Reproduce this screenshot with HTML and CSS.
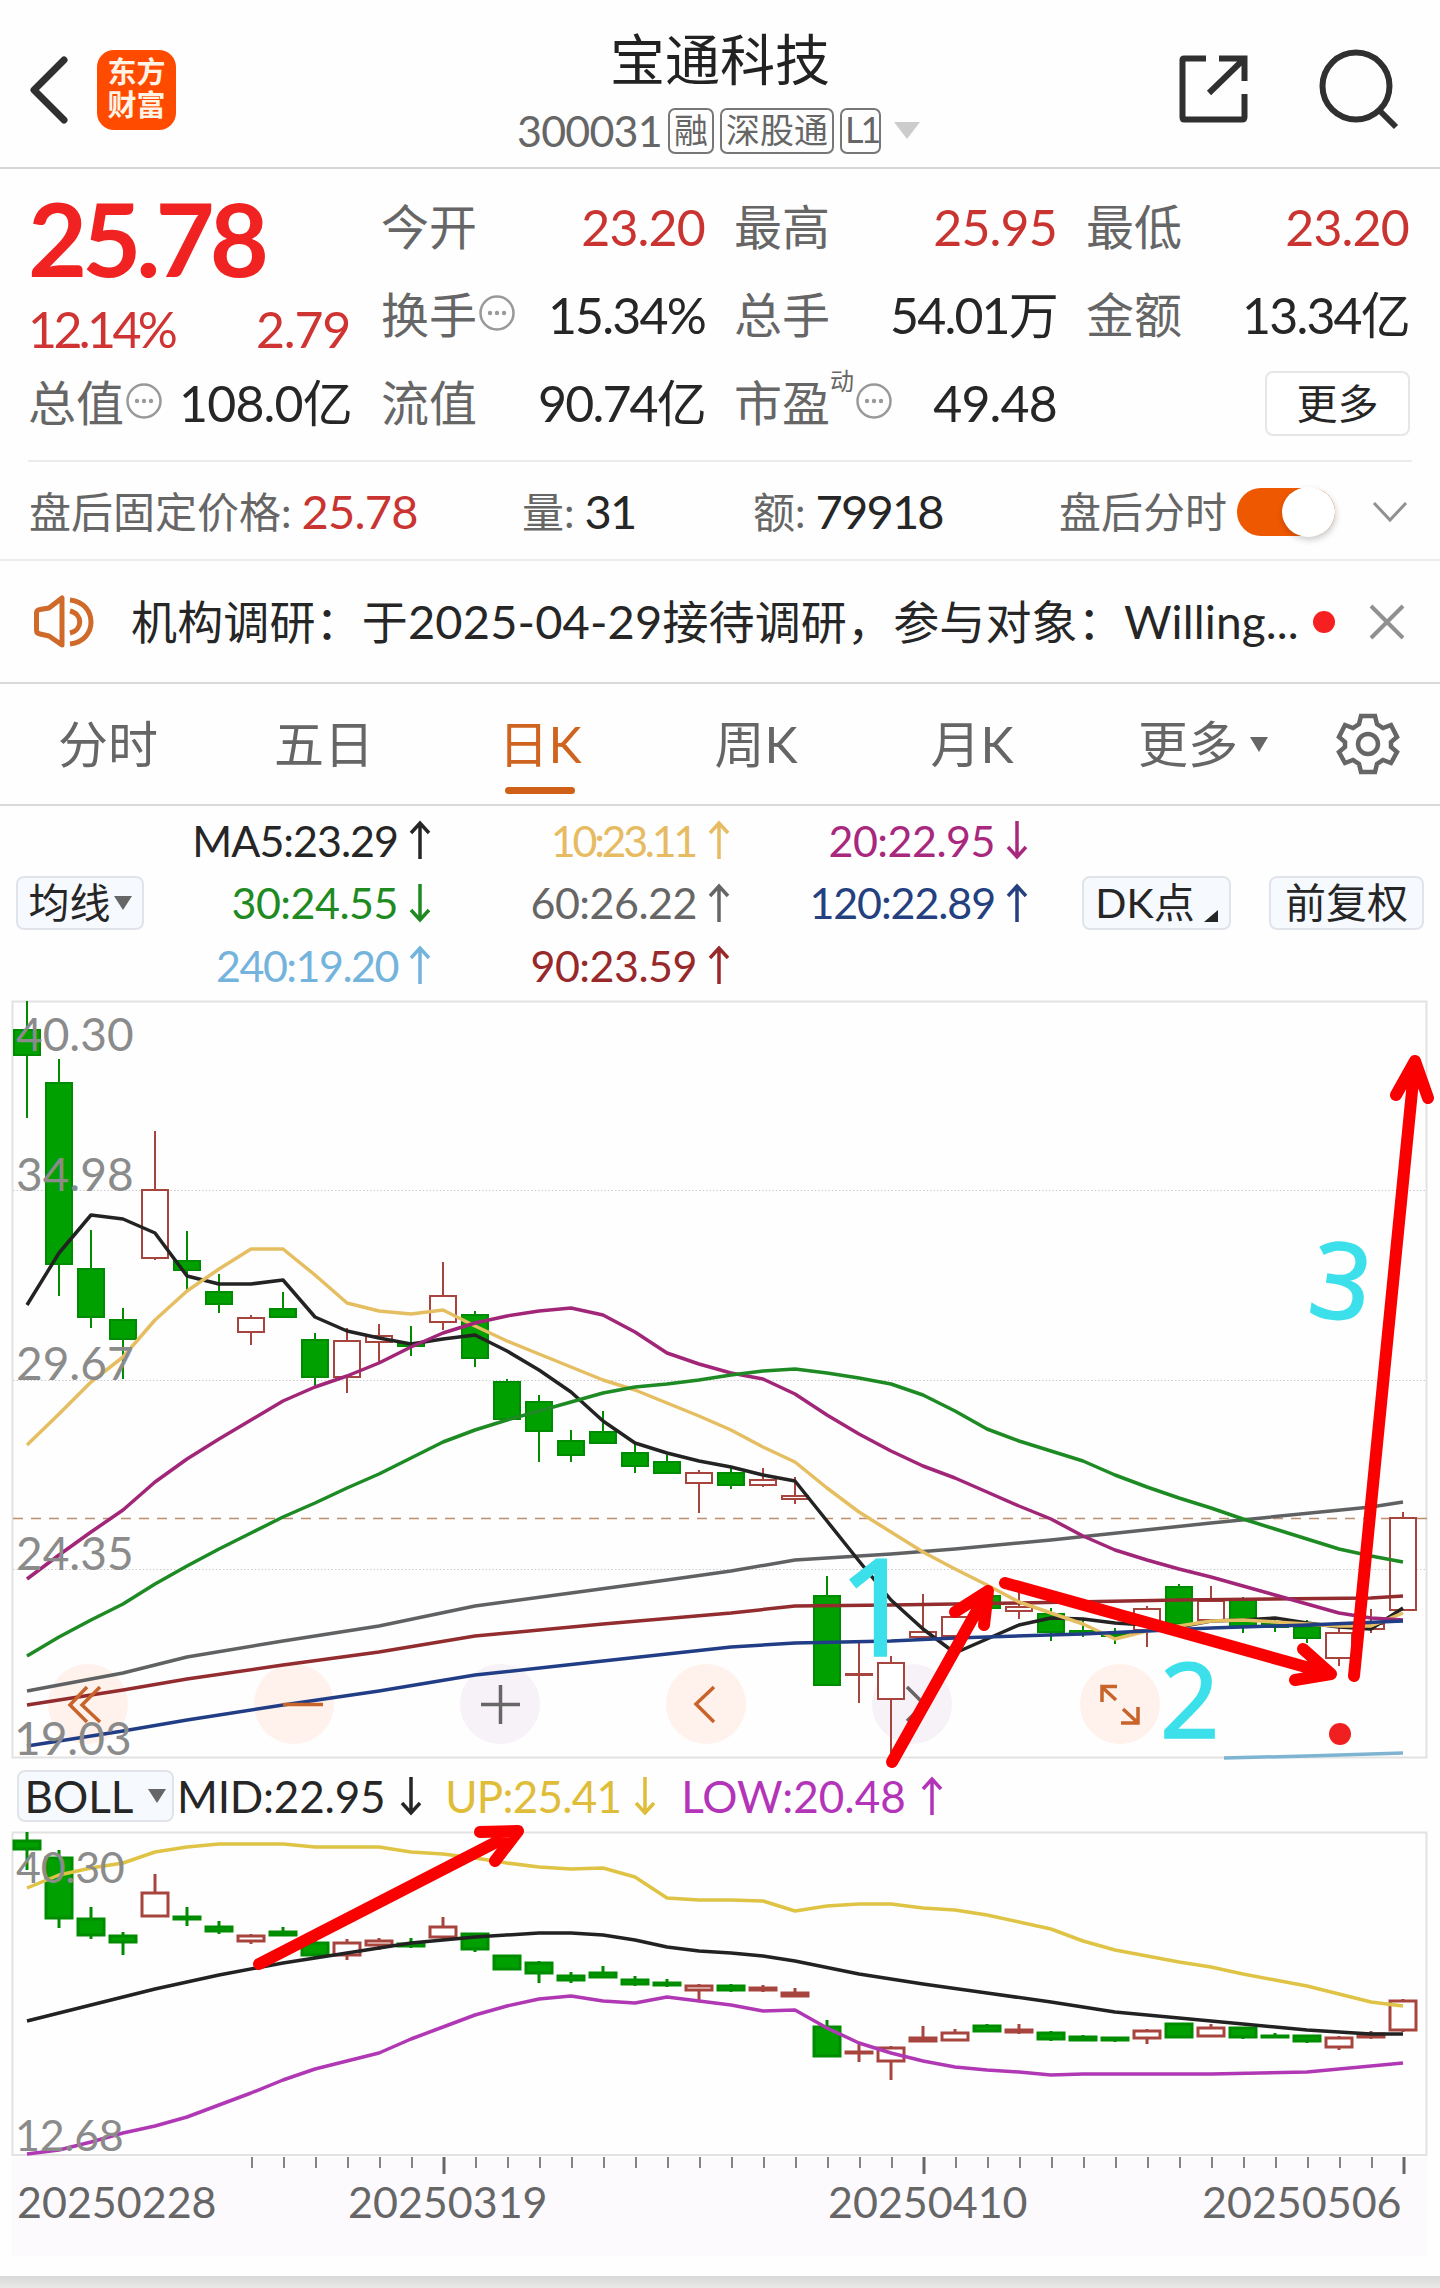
FILE: index.html
```html
<!DOCTYPE html>
<html lang="zh-CN">
<head>
    <meta charset="UTF-8">
    <meta name="viewport" content="width=device-width, initial-scale=1.0">
    <title>宝通科技 300031</title>
    <link rel="stylesheet" href="styles.css">
</head>
<body>
    <svg class="defs" width="0" height="0">
        <symbol id="up" viewBox="0 0 22 40"><path d="M11 39V3M2 13L11 3L20 13"/></symbol>
        <symbol id="down" viewBox="0 0 22 40"><path d="M11 1V37M2 27L11 37L20 27"/></symbol>
        <symbol id="more" viewBox="0 0 36 36">
            <circle cx="18" cy="18" r="16.5" fill="none" stroke="#999" stroke-width="2.5"/>
            <circle cx="11" cy="18" r="2.2" fill="#999"/><circle cx="18" cy="18" r="2.2" fill="#999"/><circle cx="25" cy="18" r="2.2" fill="#999"/>
        </symbol>
    </svg>

    <header class="header">
        <svg class="back" width="44" height="70" viewBox="0 0 44 70"><path d="M37 6L7 36L37 66"/></svg>
        <div class="logo"><span>东方</span><span>财富</span></div>
        <div class="title">
            <h1>宝通科技</h1>
            <div class="code">
                <span class="num">300031</span>
                <span class="tag">融</span>
                <span class="tag">深股通</span>
                <span class="tag tag-l1">L1</span>
                <i class="tri tri-light"></i>
            </div>
        </div>
        <svg class="share" width="70" height="70" viewBox="0 0 70 70"><path d="M28 4.500H6Q4.500 4.500 4.500 6V63Q4.500 65.500 6 65.500H64Q66.500 65.500 66.500 63V40M41 4.500H66.500V27M66 5L31 39"/></svg>
        <svg class="search" width="84" height="84" viewBox="0 0 84 84"><circle cx="39" cy="39" r="33.500"/><path d="M62 63L79 80"/></svg>
    </header>

    <section class="stats">
        <div class="price">
            <div class="last">25.78</div>
            <div class="change"><span class="pct">12.14%</span><span>2.79</span></div>
        </div>
        <div class="cell"><label>今开</label><b class="red">23.20</b></div>
        <div class="cell"><label>最高</label><b class="red">25.95</b></div>
        <div class="cell"><label>最低</label><b class="red">23.20</b></div>
        <div class="cell"><label>换手</label><svg class="info"><use href="#more"/></svg><b class="tight">15.34%</b></div>
        <div class="cell"><label>总手</label><b class="tight">54.01万</b></div>
        <div class="cell"><label>金额</label><b class="tight">13.34亿</b></div>
        <div class="cell"><label>总值</label><svg class="info"><use href="#more"/></svg><b>108.0亿</b></div>
        <div class="cell"><label>流值</label><b class="tight">90.74亿</b></div>
        <div class="cell"><label>市盈<sup>动</sup></label><svg class="info"><use href="#more"/></svg><b>49.48</b></div>
        <div class="cell last-cell"><button class="more-btn">更多</button></div>
    </section>

    <section class="after">
        <div class="after-item after-price"><label>盘后固定价格:</label><b class="red">25.78</b></div>
        <div class="after-item after-vol"><label>量:</label><b class="tight">31</b></div>
        <div class="after-item after-amt"><label>额:</label><b class="tight">79918</b></div>
        <div class="after-item after-time"><label>盘后分时</label></div>
        <div class="toggle"><i></i></div>
        <svg class="fold" width="36" height="22" viewBox="0 0 36 22"><path d="M2 2L18 19L34 2"/></svg>
    </section>

    <section class="notice">
        <svg class="speaker" width="64" height="56" viewBox="0 0 64 56">
            <path d="M3.500 19Q3.500 16 7 15.500L16 14L29 4V51L16 42L7 40Q3.500 39.500 3.500 36Z"/>
            <path d="M37 17C50 20 50 36 37 39M37 6C65 9 65 47 37 50"/>
        </svg>
        <p>机构调研：于<span class="date">2025-04-29</span>接待调研，参与对象：<span class="en">Willing...</span></p>
        <i class="dot"></i>
        <svg class="close" width="36" height="36" viewBox="0 0 36 36"><path d="M2 2L34 34M34 2L2 34"/></svg>
    </section>

    <nav class="tabs">
        <a>分时</a>
        <a>五日</a>
        <a class="active">日K</a>
        <a>周K</a>
        <a>月K</a>
        <a class="tab-more">更多<i class="tri tri-tab"></i></a>
        <svg class="gear" width="64" height="64" viewBox="0 0 64 64">
            <path d="M25 4H39L41 12L47 16L55 13L61 25L55 30V35L61 40L55 51L47 48L41 52L39 60H25L23 52L17 48L9 51L3 40L9 35V30L3 25L9 13L17 16L23 12Z"/>
            <circle cx="32" cy="32" r="10"/>
        </svg>
    </nav>

    <section class="legend">
        <button class="chip chip-ma">均线<i class="tri tri-chip"></i></button>
        <div class="ma">
            <span class="c5">MA5:23.29<svg><use href="#up"/></svg></span>
            <span class="c10">10:23.11<svg><use href="#up"/></svg></span>
            <span class="c20">20:22.95<svg><use href="#down"/></svg></span>
            <span class="c30">30:24.55<svg><use href="#down"/></svg></span>
            <span class="c60">60:26.22<svg><use href="#up"/></svg></span>
            <span class="c120">120:22.89<svg><use href="#up"/></svg></span>
            <span class="c240">240:19.20<svg><use href="#up"/></svg></span>
            <span class="c90">90:23.59<svg><use href="#up"/></svg></span>
        </div>
        <button class="chip chip-dk">DK点<i class="corner"></i></button>
        <button class="chip chip-fq">前复权</button>
    </section>

    <section class="charts">
        <svg class="chart" id="kline" width="1440" height="770" viewBox="0 996 1440 770">
            <rect class="frame" x="12.500" y="1001.500" width="1414" height="756"/>
            <path class="grid" d="M13 1190.500H1427M13 1380.500H1427M13 1569.500H1427"/>
            <path class="now" d="M13 1518.500H1427"/>
            <g class="tools">
                <circle class="warm" cx="88" cy="1704" r="40"/>
                <circle class="warm" cx="294" cy="1704" r="40"/>
                <circle class="cool" cx="500" cy="1704" r="40"/>
                <circle class="warm" cx="706" cy="1704" r="40"/>
                <circle class="cool" cx="912" cy="1704" r="40"/>
                <circle class="warm" cx="1120" cy="1704" r="40"/>
                <path class="gray" d="M907 1687L924 1704L907 1721"/>
            </g>
            <g id="kline-data"></g>
            <g class="tools">
                <path d="M87 1687L70 1705L87 1722M100 1687L82 1705L100 1722M283 1704.500H323"/>
                <path class="gray" d="M481 1704.500H520M500.500 1685V1724"/>
                <path d="M714 1687L696 1704L714 1722M1116 1700L1102 1687M1117 1686.500H1102V1702M1123 1709L1138 1723M1121 1723H1138V1707"/>
            </g>
            <circle class="mark" cx="1340" cy="1734" r="11"/>
            <g class="scale">
                <text x="16" y="1051">40.30</text>
                <text x="16" y="1191">34.98</text>
                <text x="16" y="1380">29.67</text>
                <text x="16" y="1570">24.35</text>
                <text x="14" y="1755">19.03</text>
            </g>
        </svg>

        <div class="boll">
            <button class="chip chip-boll">BOLL<i class="tri tri-chip"></i></button>
            <span class="mid">MID:22.95<svg><use href="#down"/></svg></span>
            <span class="upper">UP:25.41<svg><use href="#down"/></svg></span>
            <span class="low">LOW:20.48<svg><use href="#up"/></svg></span>
        </div>

        <svg class="chart" id="boll" width="1440" height="448" viewBox="0 1828 1440 448">
            <rect class="axis-bg" x="12" y="2157" width="1415" height="99"/>
            <rect class="frame" x="12.500" y="1832.500" width="1414" height="322.500"/>
            <g id="boll-data"></g>
            <g id="ticks"></g>
            <g class="scale scale-small">
                <text x="16" y="1883">40.30</text>
                <text x="15" y="2151">12.68</text>
            </g>
            <g class="dates">
                <text x="17" y="2218">20250228</text>
                <text x="348" y="2218">20250319</text>
                <text x="828" y="2218">20250410</text>
                <text x="1202" y="2218">20250506</text>
            </g>
        </svg>

        <!-- hand-drawn wave marks over both charts -->
        <svg class="notes" width="1440" height="1280" viewBox="0 996 1440 1280">
            <text x="838" y="1656" font-size="136">1</text>
            <text x="1160" y="1738" font-size="104">2</text>
            <text x="1311" y="1319" font-size="106" transform="rotate(8 1340 1280)">3</text>
            <path d="M892 1762L988 1591M955 1612L988 1591L984 1625"/>
            <path d="M1005 1583L1331 1674M1303 1649L1331 1674L1295 1680"/>
            <path d="M1354 1676L1415 1061M1396 1095L1415 1061L1428 1098"/>
            <path d="M259 1964L518 1831M480 1832L518 1831L495 1861"/>
        </svg>
    </section>

    <footer class="bottom"></footer>

    <script src="script.js"></script>
</body>
</html>
```
FILE: styles.css
```css
* {
    box-sizing: border-box;
}
body {
    margin: 0;
    width: 1440px;
    height: 2288px;
    overflow: hidden;
    background: #fefefe;
    color: #262626;
    font-family: Lato, "Noto Sans CJK SC", sans-serif;
    line-height: 1;
}
button {
    font-family: inherit;
    color: inherit;
    line-height: 1;
    padding: 0;
}
b, h1 {
    font-weight: 400;
}
svg {
    display: block;
    flex: none;
}
.defs {
    position: absolute;
}
.defs path {
    fill: none;
    stroke: currentColor;
    stroke-width: 3.5;
}
.red {
    color: #c93431;
}
.tri {
    display: inline-block;
    border-left: 9px solid transparent;
    border-right: 9px solid transparent;
    border-top: 15px solid #666;
}

/* header */
.header {
    display: flex;
    height: 169px;
    border-bottom: 2px solid #d6d6d6;
    padding-left: 27px;
}
.header path, .header circle {
    fill: none;
    stroke: #303030;
    stroke-width: 6;
}
.back {
    margin-top: 54px;
}
.header .back path {
    stroke-width: 7;
    stroke-linecap: round;
    stroke-linejoin: round;
}
.logo {
    display: flex;
    flex-direction: column;
    align-items: center;
    justify-content: center;
    gap: 4px;
    width: 79px;
    height: 80px;
    margin: 50px 0 0 26px;
    padding-bottom: 4px;
    border-radius: 17px;
    background: #ff4b00;
    color: #fff3e6;
    font-size: 29px;
    font-weight: 700;
}
.title {
    width: 410px;
    margin-left: 341px;
}
.title h1 {
    margin: 32px 0 0 93px;
    font-size: 55px;
    font-weight: 400;
    color: #222;
}
.code {
    display: flex;
    align-items: center;
    gap: 6px;
    height: 47px;
    margin-top: 20px;
    color: #666;
}
.num {
    width: 145px;
    font-size: 43px;
    letter-spacing: -0.8px;
}
.tag {
    height: 46px;
    padding: 0 4px;
    border: 2px solid #777;
    border-radius: 7px;
    font-size: 34px;
    line-height: 39px;
    white-space: nowrap;
}
.tag-l1 {
    width: 41px;
    padding: 0 3px;
    font-size: 36px;
    letter-spacing: -3px;
}
.tri-light {
    margin-left: 7px;
    border-width: 17px 13px 0;
    border-color: #ccc transparent;
}
.share {
    margin: 54px 0 0 251px;
}
.search {
    margin: 47px 0 0 69px;
}

/* quote numbers */
.stats {
    display: grid;
    grid-template-columns: 322px 322px 321px 321px;
    grid-template-rows: repeat(3, 88px);
    column-gap: 31px;
    height: 293px;
    margin: 0 28px;
    padding: 14px 0 0;
    border-bottom: 2px solid #ececec;
}
.price {
    grid-row: span 2;
    color: #f02222;
}
.last {
    margin-top: 4px;
    height: 102px;
    font-size: 102px;
    font-weight: 700;
    letter-spacing: -5px;
}
.change {
    display: flex;
    justify-content: space-between;
    margin-top: 15px;
    font-size: 50px;
    letter-spacing: -1.2px;
    color: #cf3432;
}
.pct {
    letter-spacing: -3.6px;
}
.cell {
    display: flex;
    align-items: center;
}
.cell label {
    position: relative;
    font-size: 48px;
    color: #666;
}
.cell sup {
    display: inline-block;
    width: 24px;
    height: 24px;
    margin-top: -12px;
    font-size: 24px;
    line-height: 1;
    vertical-align: 31px;
}
.cell b {
    margin-left: auto;
    margin-right: -2px;
    font-size: 50px;
    letter-spacing: -0.8px;
    white-space: nowrap;
}
.cell .tight, .after .tight {
    letter-spacing: -1.8px;
}
.info {
    width: 36px;
    height: 36px;
    margin-left: 2px;
    margin-top: -4px;
}
.more-btn {
    width: 145px;
    height: 65px;
    margin: 0 -3px 0 auto;
    border: 2px solid #e6e6e6;
    border-radius: 8px;
    background: #fff;
    font-size: 41px;
}

/* after-hours row */
.after {
    display: flex;
    align-items: center;
    height: 99px;
    padding-left: 29px;
    padding-top: 2px;
    border-bottom: 2px solid #ececec;
}
.after-item {
    display: flex;
    align-items: center;
    gap: 10px;
    font-size: 42px;
}
.after label {
    color: #666;
    white-space: nowrap;
}
.after b {
    font-size: 47px;
    letter-spacing: -0.8px;
}
.after-price {
    width: 493px;
}
.after-vol {
    width: 231px;
}
.after-amt {
    width: 306px;
}
.after-time {
    width: 178px;
}
.toggle {
    display: flex;
    justify-content: flex-end;
    width: 98px;
    height: 48px;
    border-radius: 24px;
    background: #ee5800;
}
.toggle i {
    width: 53px;
    height: 50px;
    margin-top: -1px;
    border-radius: 50%;
    background: #fff;
    box-shadow: 1px 3px 6px rgba(0, 0, 0, 0.2);
}
.fold {
    margin-left: 37px;
}
.fold path, .close path {
    fill: none;
    stroke: #909090;
    stroke-width: 3;
}

/* notice */
.notice {
    display: flex;
    align-items: center;
    height: 123px;
    padding-left: 33px;
    border-bottom: 2px solid #d9d9d9;
}
.speaker path {
    fill: none;
    stroke: #cf6a2a;
    stroke-width: 5;
    stroke-linejoin: round;
}
.notice p {
    width: 1167px;
    margin: 0 0 0 34px;
    font-size: 46px;
    letter-spacing: 0.15px;
    white-space: nowrap;
}
.date {
    font-size: 47px;
}
.en {
    font-size: 46px;
}
.dot {
    width: 22px;
    height: 22px;
    margin-left: 15px;
    border-radius: 50%;
    background: #f5201f;
}
.close {
    margin-left: 34px;
}
.close path {
    stroke-width: 4;
}

/* period tabs */
.tabs {
    display: grid;
    grid-template-columns: 216px 216px 216px 216px 216px 246px 1fr;
    align-items: center;
    height: 122px;
    border-bottom: 2px solid #d9d9d9;
}
.tabs a {
    display: flex;
    align-items: center;
    justify-content: center;
    height: 100%;
    font-size: 50px;
    color: #666;
    white-space: nowrap;
}
.tabs .active {
    position: relative;
    color: #cf6420;
}
.tabs .active::after {
    content: "";
    position: absolute;
    left: 73px;
    bottom: 10px;
    width: 70px;
    height: 7px;
    border-radius: 4px;
    background: #d06018;
}
.tri-tab {
    margin-left: 12px;
}
.gear {
    margin-left: 10px;
}
.gear path, .gear circle {
    fill: none;
    stroke: #666;
    stroke-width: 4.5;
}

/* moving average legend */
.legend {
    display: flex;
    align-items: center;
    height: 190px;
    padding: 3px 0 0 16px;
}
.chip {
    display: flex;
    align-items: center;
    justify-content: center;
    height: 54px;
    border: 2px solid #e0e4ea;
    border-radius: 8px;
    background: #f6f9fe;
    font-size: 41px;
    white-space: nowrap;
}
.chip-ma {
    width: 128px;
}
.tri-chip {
    margin-left: 3px;
    border-width: 14px 9px 0;
}
.ma {
    display: grid;
    grid-template-columns: 287px 299px 298px;
    grid-auto-rows: 62.5px;
    width: 938px;
}
.ma span, .boll span {
    display: flex;
    align-items: center;
    justify-content: flex-end;
    gap: 11px;
    font-size: 43px;
    letter-spacing: -0.5px;
}
.ma svg, .boll svg {
    width: 22px;
    height: 40px;
}
.ma .c5 { color: #262626; letter-spacing: -1px; }
.ma .c10 { color: #e6bb62; letter-spacing: -3.3px; gap: 13px; }
.c20 { color: #a8287e; }
.c30 { color: #1f8a22; }
.c60 { color: #666; }
.ma .c120 { color: #24407e; letter-spacing: -1.1px; }
.ma .c240 { color: #74b4dc; letter-spacing: -1.5px; }
.c90 { color: #98292b; }
.chip-dk {
    width: 149px;
}
.corner {
    align-self: flex-end;
    margin: 0 0 6px 9px;
    border-left: 14px solid transparent;
    border-bottom: 12px solid #262626;
}
.chip-fq {
    width: 155px;
    margin-left: 38px;
}

/* charts */
.charts {
    position: relative;
    height: 1280px;
}
.frame {
    fill: none;
    stroke: #e2e2e2;
    stroke-width: 2;
}
.grid {
    stroke: #ccc;
    stroke-dasharray: 1.5 2;
}
.now {
    stroke: #bd8e6d;
    stroke-width: 1.3;
    stroke-dasharray: 10 8;
}
.line {
    fill: none;
    stroke-width: 3.5;
    stroke-linejoin: round;
}
.green {
    fill: #00a000;
    stroke: #008c00;
}
.hollow {
    fill: #fff;
    stroke: #a7443e;
}
.warm {
    fill: #fff1ec;
}
.cool {
    fill: #f7f2f8;
}
.tools path {
    fill: none;
    stroke: #c8642a;
    stroke-width: 3.5;
}
.tools .gray {
    stroke: #666;
}
.mark {
    fill: #f02020;
}
.scale {
    font-size: 46px;
    fill: #8b8b8b;
}
.scale-small {
    font-size: 43px;
    letter-spacing: -0.3px;
}
.dates {
    font-size: 43px;
    fill: #666;
}
.axis-bg {
    fill: #fdfafe;
}
.boll {
    display: flex;
    align-items: center;
    height: 62px;
    padding-left: 17px;
    padding-bottom: 3px;
}
.boll span {
    gap: 15px;
    font-size: 44px;
}
.chip-boll {
    width: 157px;
    height: 52px;
    font-size: 44px;
}
.chip-boll .tri-chip {
    margin-left: 15px;
}
.boll .mid {
    margin-left: 3px;
    letter-spacing: -0.2px;
}
.boll .upper {
    margin-left: 23px;
    gap: 13px;
    color: #dfbd38;
    letter-spacing: -0.8px;
}
.boll .low {
    margin-left: 25px;
    color: #b334b8;
    letter-spacing: 0;
}
.notes {
    position: absolute;
    left: 0;
    top: 0;
}
.notes path {
    fill: none;
    stroke: #fb0000;
    stroke-width: 12;
    stroke-linecap: round;
    stroke-linejoin: round;
}
.notes text {
    font-family: "Noto Sans", sans-serif;
    fill: #3ce0ea;
    stroke: #3ce0ea;
    stroke-width: 1.5;
}
.bottom {
    height: 12px;
    background: linear-gradient(#d8d8d8, #eaeae8);
}
```
FILE: script.js
```javascript
const NS = 'http://www.w3.org/2000/svg';
const X0 = 27;
const STEP = 32;

// [rising, high, body top, body bottom, low]
const kline = [
    [0,1001,1030,1055,1118],[0,1059,1083,1264,1296],[0,1230,1269,1317,1328],[0,1308,1320,1339,1379],
    [1,1131,1190,1258,1260],[0,1231,1261,1270,1290],[0,1274,1292,1304,1313],[1,1315,1318,1332,1345],
    [0,1292,1309,1317,1318],[0,1333,1340,1377,1388],[1,1328,1341,1377,1393],[1,1324,1336,1342,1363],
    [0,1326,1343,1346,1356],[1,1262,1296,1322,1330],[0,1311,1315,1358,1367],[0,1379,1382,1419,1419],
    [0,1395,1402,1431,1462],[0,1430,1441,1455,1462],[0,1411,1432,1443,1444],[0,1442,1453,1466,1473],
    [0,1455,1462,1473,1474],[1,1470,1473,1483,1513],[0,1467,1473,1485,1489],[1,1468,1480,1485,1487],
    [1,1477,1496,1499,1504],[0,1576,1596,1685,1686],[1,1643,1674,1675,1703],[1,1656,1663,1699,1756],
    [1,1594,1632,1637,1638],[1,1614,1617,1636,1637],[0,1590,1596,1608,1610],[1,1592,1607,1611,1619],
    [0,1608,1614,1632,1641],[0,1620,1631,1634,1637],[0,1628,1634,1636,1644],[1,1606,1609,1630,1647],
    [0,1584,1587,1624,1626],[1,1586,1601,1620,1622],[0,1597,1600,1626,1633],[0,1618,1623,1627,1632],
    [0,1620,1627,1638,1643],[1,1628,1633,1658,1666],[1,1609,1624,1629,1633],[1,1512,1518,1610,1611]
];

const boll = [
    [0,1832,1841,1849,1870],[0,1850,1858,1918,1928],[0,1907,1919,1935,1939],[0,1932,1936,1942,1955],
    [1,1874,1893,1916,1917],[0,1907,1917,1919,1926],[0,1921,1927,1931,1934],[1,1934,1936,1941,1944],
    [0,1927,1932,1935,1935],[0,1940,1943,1955,1959],[1,1939,1943,1955,1960],[1,1938,1941,1945,1950],
    [0,1938,1944,1946,1948],[1,1917,1927,1937,1940],[0,1933,1934,1949,1952],[0,1955,1956,1969,1969],
    [0,1961,1963,1973,1983],[0,1972,1976,1980,1983],[0,1966,1973,1977,1977],[0,1976,1980,1984,1986],
    [0,1979,1983,1985,1987],[1,1984,1986,1990,2000],[0,1984,1986,1990,1992],[1,1985,1988,1990,1992],
    [1,1988,1993,1996,1997],[0,2020,2027,2056,2056],[1,2043,2052,2053,2062],[1,2046,2048,2061,2080],
    [1,2026,2038,2041,2042],[1,2029,2033,2040,2041],[0,2024,2026,2031,2032],[1,2024,2030,2032,2034],
    [0,2031,2033,2039,2041],[0,2035,2037,2040,2040],[0,2037,2038,2040,2042],[1,2029,2031,2038,2044],
    [0,2023,2024,2037,2037],[1,2024,2028,2036,2037],[0,2027,2028,2037,2039],[0,2033,2036,2037,2038],
    [0,2035,2036,2041,2043],[1,2036,2038,2047,2050],[1,2031,2034,2037,2039],[1,1999,2001,2030,2032]
];

const klineLines = [
    ['#5f6163', '27,1691 123,1673 187,1657 283,1641 379,1626 475,1606 571,1593 667,1580 731,1571 795,1560 891,1554 955,1549 1051,1540 1211,1523 1371,1507 1403,1502'],
    ['#922c2e', '27,1705 123,1690 187,1679 283,1665 379,1652 475,1636 603,1624 731,1613 795,1606 891,1605 1019,1603 1179,1600 1371,1598 1403,1596'],
    ['#232323', '27,1305 59,1253 91,1215 123,1219 155,1233 187,1276 219,1284 251,1284 283,1280 315,1317 347,1331 379,1338 411,1344 443,1339 475,1335 507,1351 539,1370 571,1392 603,1421 635,1443 667,1453 699,1461 731,1467 763,1475 795,1481 827,1521 859,1561 891,1600 923,1629 955,1653 987,1639 1019,1625 1051,1618 1083,1619 1115,1623 1147,1625 1179,1627 1211,1621 1243,1620 1275,1618 1307,1623 1339,1627 1371,1629 1403,1608'],
    ['#e6be62', '27,1445 59,1414 91,1382 123,1357 155,1320 187,1291 219,1269 251,1249 283,1249 315,1275 347,1303 379,1311 411,1314 443,1310 475,1326 507,1341 539,1354 571,1367 603,1380 635,1390 667,1403 699,1416 731,1430 763,1447 795,1462 827,1488 859,1512 891,1532 923,1552 955,1569 987,1585 1019,1602 1051,1613 1083,1624 1115,1639 1147,1631 1179,1626 1211,1621 1243,1620 1275,1622 1307,1624 1339,1626 1371,1626 1403,1613'],
    ['#a12677', '27,1579 59,1555 91,1532 123,1510 155,1482 187,1459 219,1439 251,1420 283,1401 315,1387 347,1376 379,1363 411,1347 443,1333 475,1323 507,1316 539,1311 571,1308 603,1315 635,1332 667,1353 699,1364 731,1373 763,1379 795,1394 827,1415 859,1434 891,1451 923,1466 955,1478 987,1492 1019,1506 1051,1519 1083,1536 1115,1550 1147,1560 1179,1569 1211,1577 1243,1586 1275,1595 1307,1604 1339,1613 1371,1618 1403,1620'],
    ['#1d8a24', '27,1656 59,1637 91,1620 123,1604 155,1584 187,1566 219,1549 251,1533 283,1517 315,1503 347,1488 379,1474 411,1458 443,1442 475,1430 507,1420 539,1411 571,1402 603,1393 635,1387 667,1384 699,1380 731,1375 763,1371 795,1369 827,1373 859,1378 891,1384 923,1395 955,1411 987,1429 1019,1441 1051,1451 1083,1461 1115,1475 1147,1487 1179,1498 1211,1508 1243,1519 1275,1529 1307,1539 1339,1549 1371,1556 1403,1562'],
    ['#213d85', '27,1746 123,1731 187,1720 283,1705 379,1691 475,1675 603,1661 731,1647 795,1643 891,1641 955,1638 1083,1634 1211,1628 1307,1625 1403,1621'],
    ['#7eb4d2', '1224,1758 1307,1756 1403,1753']
];

const bollLines = [
    ['#dfc344', '27,1888 59,1875 91,1868 123,1863 155,1852 187,1847 219,1844 283,1844 315,1847 379,1847 411,1852 443,1854 475,1858 507,1863 539,1867 571,1869 603,1868 635,1877 667,1898 699,1900 731,1900 763,1901 795,1911 827,1906 859,1904 891,1904 923,1908 955,1910 987,1915 1019,1922 1051,1929 1083,1941 1115,1950 1147,1956 1179,1962 1211,1967 1243,1974 1275,1980 1307,1986 1339,1994 1371,2002 1403,2006'],
    ['#222222', '27,2021 91,2005 155,1989 219,1975 283,1963 347,1953 411,1943 475,1937 539,1933 571,1933 603,1935 635,1940 667,1947 699,1951 731,1953 763,1956 795,1961 859,1974 923,1984 987,1993 1051,2002 1115,2012 1179,2018 1243,2024 1307,2030 1371,2034 1403,2034'],
    ['#b038b4', '27,2154 59,2150 91,2142 123,2133 155,2126 187,2117 219,2105 251,2093 283,2080 315,2069 347,2061 379,2053 411,2039 443,2027 475,2015 507,2006 539,1999 571,1996 603,2001 635,2003 667,1997 699,2001 731,2005 763,2011 795,2010 827,2028 859,2043 891,2053 923,2061 955,2067 987,2070 1019,2072 1051,2075 1083,2074 1211,2074 1307,2072 1403,2063']
];

function add(parent, tag, attrs) {
    const el = document.createElementNS(NS, tag);
    for (const key in attrs) {
        el.setAttribute(key, attrs[key]);
    }
    parent.appendChild(el);
}

function drawCandles(parent, data, stroke) {
    data.forEach(([rising, high, top, bottom, low], i) => {
        const x = X0 + i * STEP;
        add(parent, 'path', {
            class: rising ? 'hollow' : 'green',
            'stroke-width': stroke,
            d: `M${x} ${high}V${top}M${x} ${bottom}V${low}M${x - 13} ${top}H${x + 13}V${bottom}H${x - 13}Z`
        });
    });
}

function drawLines(parent, lines) {
    lines.forEach(([color, points]) => {
        add(parent, 'polyline', { class: 'line', stroke: color, points: points });
    });
}

const klineData = document.getElementById('kline-data');
drawCandles(klineData, kline, 2);
drawLines(klineData, klineLines);

const bollData = document.getElementById('boll-data');
drawCandles(bollData, boll, 3);
drawLines(bollData, bollLines);

// one tick per trading day, longer ones where a date is printed
const ticks = document.getElementById('ticks');
for (let i = 7; i < 44; i++) {
    const major = i === 13 || i === 28 || i === 43;
    const x = X0 + i * STEP + 1;
    add(ticks, 'path', {
        stroke: '#666',
        'stroke-width': major ? 3 : 1.6,
        d: `M${x} 2157V${major ? 2174 : 2168}`
    });
}
```
